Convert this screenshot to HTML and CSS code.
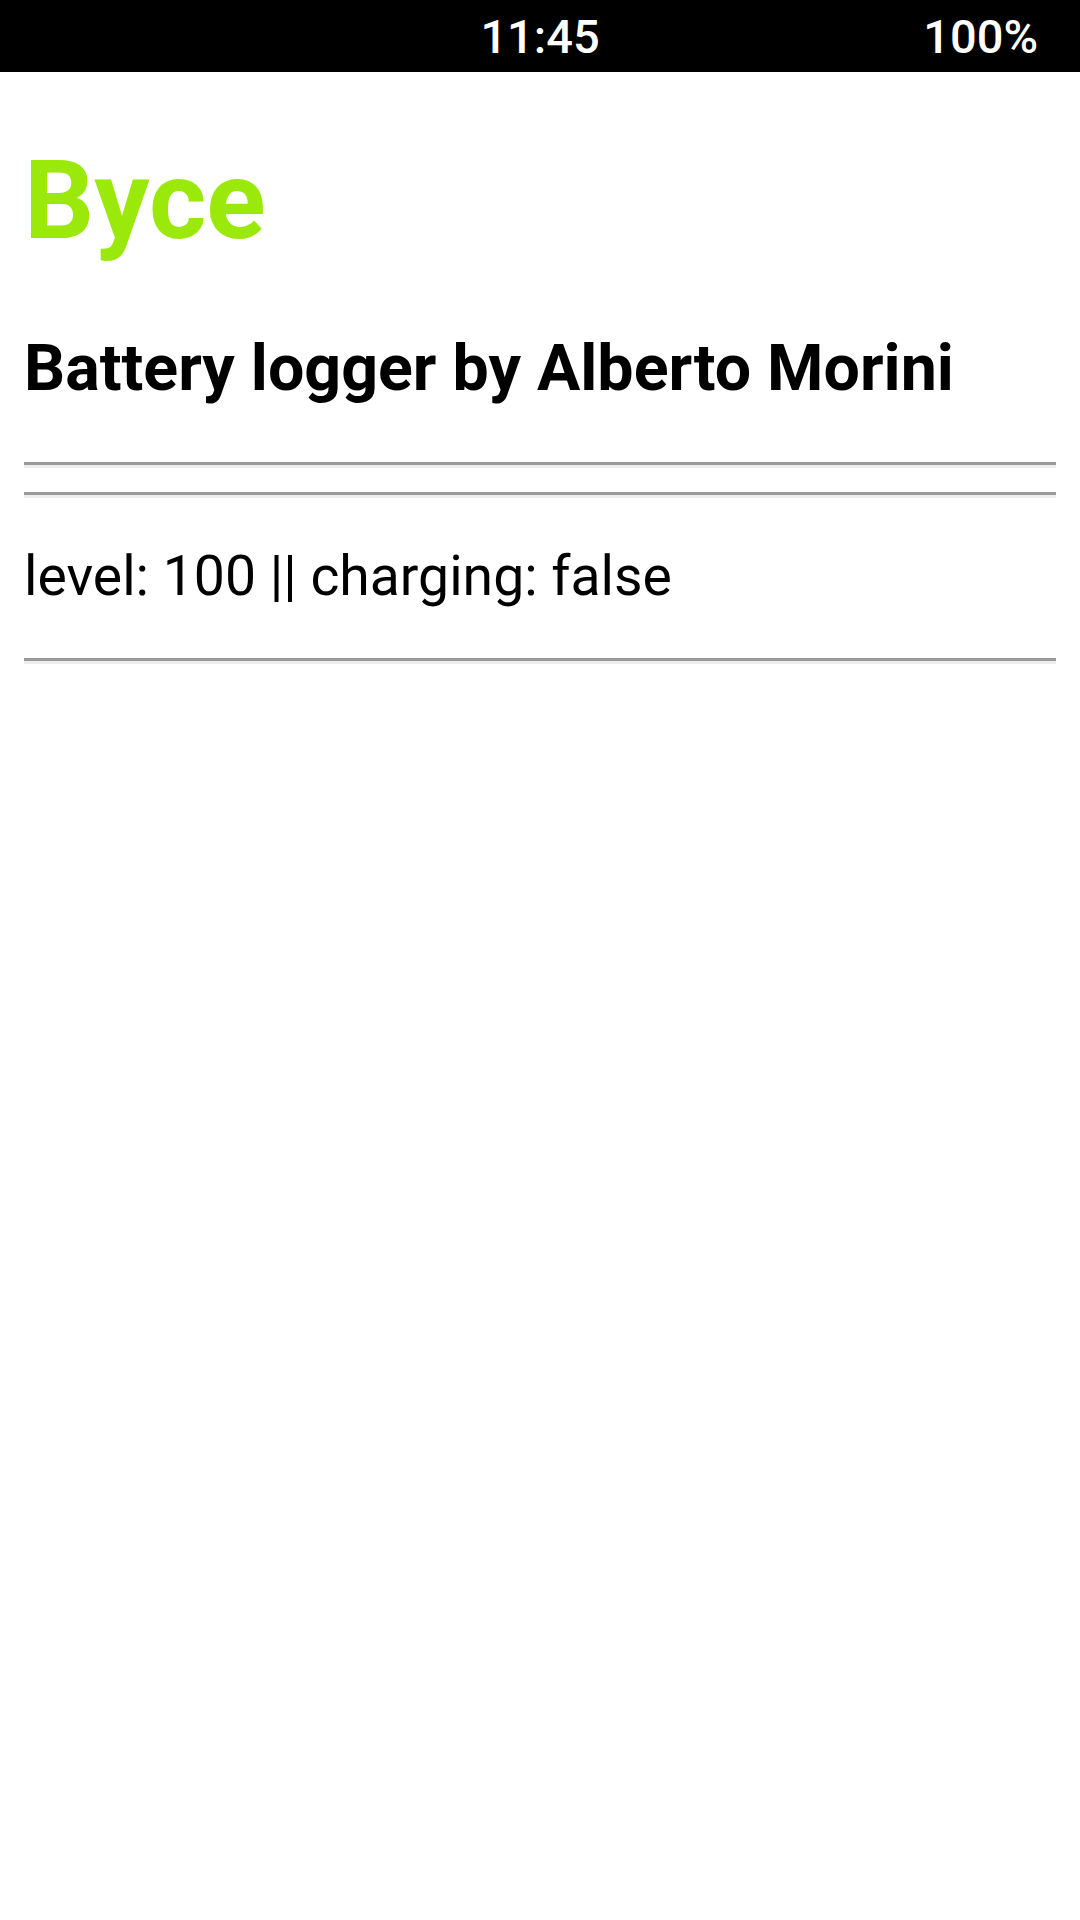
FILE: index.html
```html
<!DOCTYPE html>
<html>
<head>
<meta charset="utf-8">
<link rel="stylesheet" href="styles.css">
</head>
<body>
<div class="statusbar">
  <span class="time">11:45</span>
  <span class="battery">100%</span>
</div>
<main class="content">
  <h1 class="title">Byce</h1>
  <h3 class="subtitle">Battery logger by Alberto Morini</h3>
  <hr class="rule rule-first">
  <hr class="rule rule-second">
  <p class="log">level: 100 || charging: false</p>
  <hr class="rule rule-last">
</main>
</body>
</html>
```

FILE: styles.css
```css
html, body {
  margin: 0;
  padding: 0;
  background: #fff;
  font-family: Roboto, "Liberation Sans", sans-serif;
  color: #000;
}

.statusbar {
  height: 72px;
  background: #000;
  color: #fff;
  position: relative;
  font-size: 47px;
  font-weight: 500;
  line-height: 74px;
}

.time {
  display: block;
  text-align: center;
}

.battery {
  position: absolute;
  right: 42px;
  top: 0;
}

.content {
  padding: 0 24px;
  display: flow-root;
}

.title {
  margin: 64px 0 0;
  font-size: 110px;
  font-weight: 700;
  color: #9be80b;
  line-height: normal;
}

.subtitle {
  margin: 65px 0 0;
  font-size: 64.5px;
  font-weight: 700;
  line-height: normal;
}

.rule {
  margin: 0;
  height: 0;
  border: 0;
  border-top: 3px solid #9a9a9a;
  border-bottom: 3px solid #eeeeee;
}

.rule-first {
  margin-top: 56px;
}

.rule-second {
  margin-top: 24px;
}

.log {
  margin: 46px 0 0;
  font-size: 55.3px;
  line-height: normal;
}

.rule-last {
  margin-top: 49px;
}
```
